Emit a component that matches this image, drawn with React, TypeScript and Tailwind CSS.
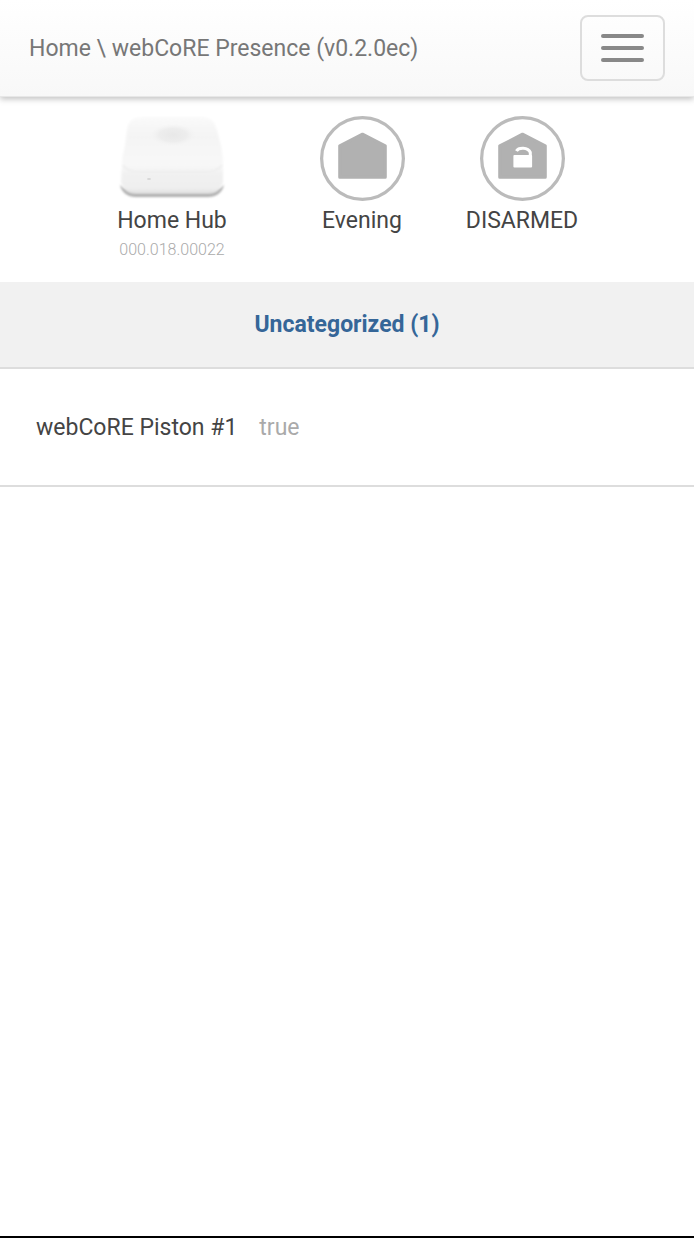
import { type ReactNode } from "react";

const PISTONS = [{ id: 1, name: "webCoRE Piston #1", state: "true" }];

function HubImage() {
  return (
    <svg className="h-21 w-28" viewBox="0 0 112 84" fill="none" aria-hidden="true">
      <defs>
        <linearGradient id="hub-body" x1="0" y1="0" x2="0" y2="1">
          <stop offset="0" stopColor="#fafafa" />
          <stop offset="0.25" stopColor="#f4f4f4" />
          <stop offset="0.62" stopColor="#f8f8f8" />
          <stop offset="0.74" stopColor="#f1f1f1" />
          <stop offset="0.92" stopColor="#efefef" />
          <stop offset="1" stopColor="#dedede" />
        </linearGradient>
        <radialGradient id="hub-dip">
          <stop offset="0" stopColor="#e8e8e8" />
          <stop offset="0.6" stopColor="#ededed" />
          <stop offset="1" stopColor="#f3f3f3" stopOpacity="0" />
        </radialGradient>
        <filter id="hub-soft" x="-10%" y="-10%" width="120%" height="120%">
          <feGaussianBlur stdDeviation="1" />
        </filter>
      </defs>
      <path
        d="M4 69C6 77 12 81 20 81H92C100 81 106 77 108 69L104 72H8Z"
        fill="#aeaeae"
        filter="url(#hub-soft)"
      />
      <g filter="url(#hub-soft)">
        <path
          d="M6 45C6 40 8 35 9 30L11 14C12 5 17 1 27 1H86C95 1 99 6 101 14L105 30C106 36 107 40 107 45V66C105 74 100 78 92 78H20C12 78 7 74 5 66Z"
          fill="url(#hub-body)"
        />
      </g>
      <path d="M7 49C10 54 15 56 22 56H90C97 56 102 54 106 49" stroke="#ededed" strokeWidth="1.5" filter="url(#hub-soft)" />
      <ellipse cx="57" cy="19" rx="23" ry="11" fill="url(#hub-dip)" />
      <ellipse cx="33" cy="63" rx="2" ry="1" fill="#d6d6d6" />
    </svg>
  );
}

function HouseIcon({ unlocked = false }: { unlocked?: boolean }) {
  return (
    <svg className="size-[85px]" viewBox="0 0 84 84" fill="none" aria-hidden="true">
      <circle cx="42" cy="42" r="40.4" stroke="#bbbbbb" strokeWidth="3.2" />
      <path
        d="M42 18L64.5 29.5V60.5H19.5V29.5Z"
        fill="#b1b1b1"
        stroke="#b1b1b1"
        strokeWidth="3"
        strokeLinejoin="round"
      />
      {unlocked ? (
        <>
          <rect x="33" y="38.5" width="18.5" height="12.5" rx="1" fill="#ffffff" />
          <path d="M36 34.5C38 31 47.5 30.5 49.7 36V41" stroke="#ffffff" strokeWidth="3" />
        </>
      ) : null}
    </svg>
  );
}

function StatusItem({ icon, label, children }: { icon: ReactNode; label: string; children?: ReactNode }) {
  return (
    <div className="flex flex-col items-center">
      <div className="h-21">{icon}</div>
      <p className="mt-1 leading-[33px]">{label}</p>
      {children}
    </div>
  );
}

export default function App() {
  return (
    <div className="flex min-h-screen flex-col border-b-2 border-black bg-white font-[Roboto,sans-serif] text-[23px] text-[#444444]">
      <header className="flex items-center justify-between border-b border-[#e7e7e7] bg-linear-to-b from-white to-[#f8f8f8] px-[29px] py-[15px] shadow-[0_2px_6px_rgba(0,0,0,0.25)]">
        <nav aria-label="Breadcrumb">
          <a href="#home" className="block leading-[33px] text-[#777777]">
            Home \ webCoRE Presence (v0.2.0ec)
          </a>
        </nav>
        <button
          type="button"
          aria-label="Toggle navigation"
          className="flex h-[66px] w-[85px] flex-col items-center justify-center gap-2 rounded-lg border-2 border-[#dddddd]"
        >
          <span className="h-1 w-[43px] rounded-sm bg-[#888888]" />
          <span className="h-1 w-[43px] rounded-sm bg-[#888888]" />
          <span className="h-1 w-[43px] rounded-sm bg-[#888888]" />
        </button>
      </header>

      <main>
        <section className="flex justify-center pt-[19px] pr-[30px] pb-[19px]" aria-label="Location status">
          <div className="w-[220px]">
            <StatusItem icon={<HubImage />} label="Home Hub">
              <p className="text-base leading-[26px] font-light text-[#aaaaaa]">000.018.00022</p>
            </StatusItem>
          </div>
          <div className="w-40">
            <StatusItem icon={<HouseIcon />} label="Evening" />
          </div>
          <div className="w-40">
            <StatusItem icon={<HouseIcon unlocked />} label="DISARMED" />
          </div>
        </section>

        <section>
          <h2 className="border-b-2 border-[#dddddd] bg-[#f1f1f1] py-[26px] text-center leading-[33px] font-bold">
            <a href="#uncategorized" className="text-[#356698]">
              Uncategorized (1)
            </a>
          </h2>
          <ul>
            {PISTONS.map((piston) => (
              <li
                key={piston.id}
                className="flex gap-[22px] border-b-2 border-[#dddddd] px-9 pt-[42px] pb-[41px] leading-[33px]"
              >
                <a href="#piston">{piston.name}</a>
                <span className="text-[#aaaaaa]">{piston.state}</span>
              </li>
            ))}
          </ul>
        </section>
      </main>
    </div>
  );
}
